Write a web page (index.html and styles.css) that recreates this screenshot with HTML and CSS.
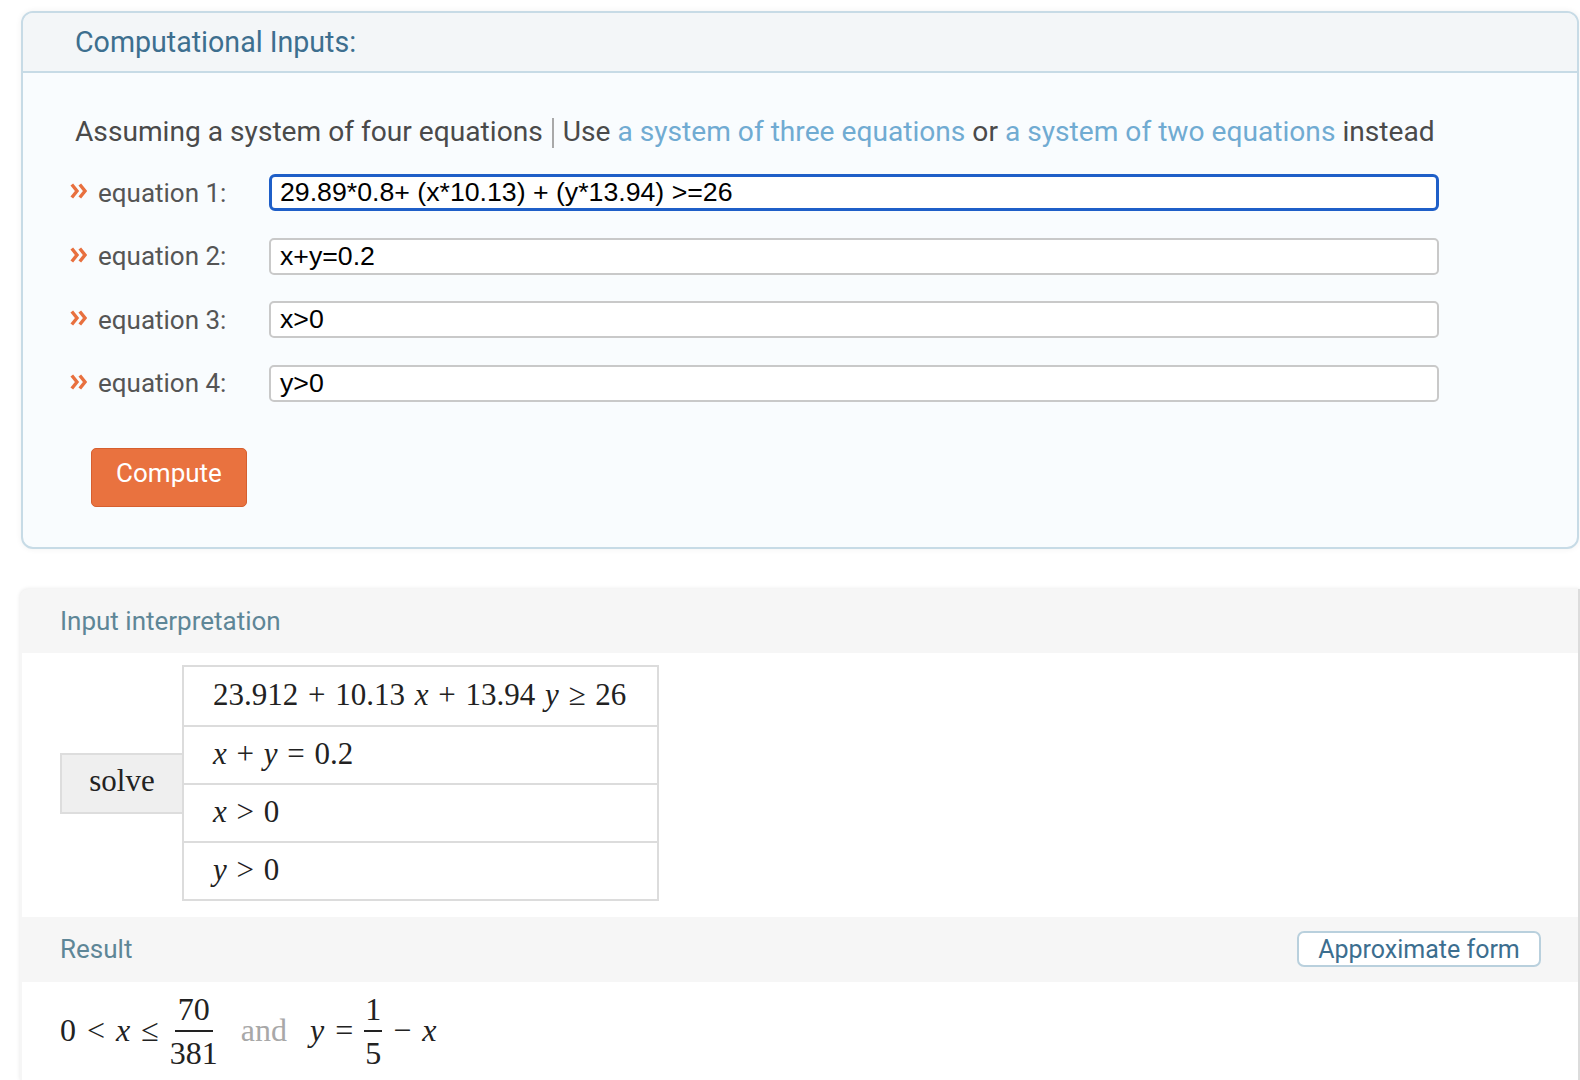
FILE: index.html
```html
<!DOCTYPE html>
<html>
<head>
<meta charset="utf-8">
<title>Computational Inputs</title>
<link rel="stylesheet" href="styles.css">
</head>
<body>
<div class="page">
  <section class="inputs">
    <header class="inputs-head">Computational Inputs:</header>
    <div class="inputs-body">
      <p class="assume">Assuming a system of four equations <span class="bar"></span> Use <a class="link">a system of three equations</a> or <a class="link">a system of two equations</a> instead</p>
      <div class="rows">
        <div class="row"><span class="chev"><svg width="17" height="16" viewBox="0 0 17 16"><path d="M1.8 1.5 L7 8 L1.8 14.5 M9.8 1.5 L15 8 L9.8 14.5" fill="none" stroke="#e8703f" stroke-width="3.4"/></svg></span><span class="label">equation 1:</span><div class="field focus">29.89*0.8+ (x*10.13) + (y*13.94) &gt;=26</div></div>
        <div class="row"><span class="chev"><svg width="17" height="16" viewBox="0 0 17 16"><path d="M1.8 1.5 L7 8 L1.8 14.5 M9.8 1.5 L15 8 L9.8 14.5" fill="none" stroke="#e8703f" stroke-width="3.4"/></svg></span><span class="label">equation 2:</span><div class="field">x+y=0.2</div></div>
        <div class="row"><span class="chev"><svg width="17" height="16" viewBox="0 0 17 16"><path d="M1.8 1.5 L7 8 L1.8 14.5 M9.8 1.5 L15 8 L9.8 14.5" fill="none" stroke="#e8703f" stroke-width="3.4"/></svg></span><span class="label">equation 3:</span><div class="field">x&gt;0</div></div>
        <div class="row"><span class="chev"><svg width="17" height="16" viewBox="0 0 17 16"><path d="M1.8 1.5 L7 8 L1.8 14.5 M9.8 1.5 L15 8 L9.8 14.5" fill="none" stroke="#e8703f" stroke-width="3.4"/></svg></span><span class="label">equation 4:</span><div class="field">y&gt;0</div></div>
      </div>
      <button class="compute">Compute</button>
    </div>
  </section>

  <section class="pod">
    <div class="pod-head"><h2 class="pod-title">Input interpretation</h2></div>
    <div class="pod-body interp">
      <div class="solve">solve</div>
      <div class="eqs">
        <div class="eq">23.912 + 10.13 <i>x</i> + 13.94 <i>y</i> ≥ 26</div>
        <div class="eq"><i>x</i> + <i>y</i> = 0.2</div>
        <div class="eq"><i>x</i> &gt; 0</div>
        <div class="eq"><i>y</i> &gt; 0</div>
      </div>
    </div>
    <div class="pod-head result-head"><h2 class="pod-title">Result</h2><button class="approx">Approximate form</button></div>
    <div class="pod-body result">
      <span class="m">0 &lt; <i>x</i> ≤</span>
      <span class="frac"><span class="num">70</span><span class="den">381</span></span>
      <span class="and">and</span>
      <span class="m"><i>y</i> =</span>
      <span class="frac small"><span class="num">1</span><span class="den">5</span></span>
      <span class="m">− <i>x</i></span>
    </div>
  </section>
</div>
</body>
</html>
```

FILE: styles.css
```css
html, body {
  margin: 0;
  padding: 0;
  background: #ffffff;
}

.page {
  padding: 11px 0 0 20px;
  font-family: Roboto, "Liberation Sans", sans-serif;
}

/* ---------- Computational inputs card ---------- */
.inputs {
  margin-left: 1px;
  width: 1558px;
  box-sizing: border-box;
  border: 2px solid #c7dbe6;
  border-radius: 12px;
  background: #f9fcfe;
  overflow: hidden;
  box-shadow: 0 0 6px rgba(0, 0, 0, 0.06);
}

.inputs-head {
  height: 60px;
  box-sizing: border-box;
  background: #f3f6f8;
  border-bottom: 2px solid #c7dbe6;
  padding-left: 52px;
  display: flex;
  align-items: center;
  font-size: 28.6px;
  color: #3d6f8f;
}

.inputs-body {
  padding: 43px 0 40px 47px;
}

.assume {
  margin: 0 0 26px 5px;
  font-size: 28.15px;
  line-height: 32px;
  color: #4a4a4a;
  white-space: nowrap;
}

.bar {
  display: inline-block;
  width: 2px;
  height: 30px;
  background: #a9a9a9;
  vertical-align: -7px;
  margin: 0 2px;
}

.link {
  color: #70abd2;
}

.rows {
  display: flex;
  flex-direction: column;
  gap: 26.5px;
}

.row {
  display: flex;
  align-items: center;
  height: 37px;
}

.chev {
  width: 28px;
  display: flex;
  align-items: center;
  margin-top: -3px;
}

.label {
  width: 171px;
  font-size: 26px;
  color: #555555;
}

.field {
  width: 1170px;
  height: 37px;
  box-sizing: border-box;
  border: 2px solid #c9c9c9;
  border-radius: 5px;
  background: #ffffff;
  padding-left: 9px;
  font-family: "Liberation Sans", Arial, sans-serif;
  font-size: 26.7px;
  line-height: 33px;
  color: #000000;
}

.field.focus {
  border: 3px solid #1f5fc8;
  border-radius: 6px;
  padding-left: 8px;
  line-height: 31px;
}

.compute {
  margin: 46px 0 0 21px;
  width: 156px;
  height: 59px;
  background: #e9723f;
  border: 1px solid #d65f2f;
  border-radius: 5px;
  color: #ffffff;
  font-family: Roboto, "Liberation Sans", sans-serif;
  font-size: 26px;
  padding: 0 0 8px;
  display: block;
}

/* ---------- Pods ---------- */
.pod {
  margin-top: 40px;
  width: 1558px;
  background: #f6f6f6;
  border-radius: 8px 0 0 0;
  box-shadow: 0 0 4px rgba(0, 0, 0, 0.10);
  border-right: 2px solid #dcdcdc;
}

.pod-head {
  height: 64px;
  padding-left: 40px;
  display: flex;
  align-items: center;
}

.pod-title {
  margin: 0;
  font-weight: normal;
  font-size: 26px;
  color: #5e8697;
}

.pod-body {
  margin-left: 2px;
  background: #ffffff;
}

.interp {
  height: 264px;
  box-sizing: border-box;
  padding: 13px 0 16px 38px;
  display: flex;
  align-items: center;
  font-family: "Liberation Serif", "DejaVu Serif", serif;
  font-size: 31px;
  color: #222222;
}

.solve {
  width: 122px;
  height: 61px;
  box-sizing: border-box;
  background: #efefef;
  border: 2px solid #dddddd;
  border-right: none;
  display: flex;
  align-items: center;
  justify-content: center;
  padding-bottom: 4px;
}

.eqs {
  width: 477px;
  border: 2px solid #dcdcdc;
  box-sizing: border-box;
}

.eq {
  height: 58px;
  box-sizing: border-box;
  padding-left: 29px;
  display: flex;
  align-items: center;
  white-space: pre;
  padding-bottom: 3px;
  word-spacing: 2px;
}

.eq + .eq {
  border-top: 2px solid #dcdcdc;
}

.result-head {
  height: 65px;
  justify-content: space-between;
}

.approx {
  margin-right: 37px;
  height: 36px;
  width: 244px;
  background: #ffffff;
  border: 2px solid #b9d0dd;
  border-radius: 7px;
  color: #3c6e8f;
  font-family: Roboto, "Liberation Sans", sans-serif;
  font-size: 25px;
  padding: 0;
}

.result {
  height: 98px;
  box-sizing: border-box;
  padding: 0 0 0 38px;
  display: flex;
  align-items: center;
  font-family: "Liberation Serif", "DejaVu Serif", serif;
  font-size: 32px;
  color: #222222;
  gap: 11px;
  word-spacing: 3px;
}

.frac {
  display: inline-flex;
  flex-direction: column;
  align-items: center;
}

.num {
  padding: 0 3px;
  line-height: 42px;
  border-bottom: 2px solid #222222;
}

.small .num {
  padding: 0 1px;
}

.den {
  line-height: 42px;
}

.and {
  color: #a8a8a8;
  margin: 0 12px;
}
```
